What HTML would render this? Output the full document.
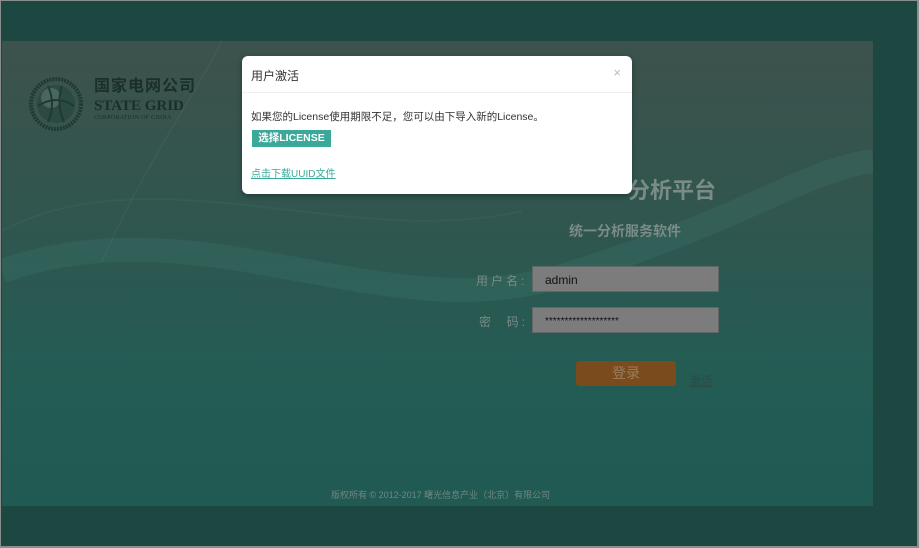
<!DOCTYPE html>
<html><head><meta charset="utf-8"><style>
*{margin:0;padding:0;box-sizing:border-box}
body{width:919px;height:548px;background:#1d4841;font-family:"Liberation Sans","Noto Sans CJK SC",sans-serif;position:relative;overflow:hidden}
.frame{position:absolute;left:0;top:0;width:919px;height:548px;border:1px solid #8a8f8e;border-width:1px 2px 2px 1px}
.panel{position:absolute;left:2px;top:41px;width:871px;height:465px;background:linear-gradient(180deg,#3d524c 0%,#2f564f 40%,#245c54 70%,#205a52 100%);overflow:hidden}
.abs{position:absolute}
.title{right:203px;top:173px;text-align:right;font-size:22px;font-weight:bold;color:#7b8b86;white-space:nowrap}
.sub{left:569px;top:221px;font-size:14px;font-weight:bold;color:#7b8b86}
.lbl{color:#7a8c87;font-size:12px;letter-spacing:3px}
.inp{background:#7c7c7c;border:1px solid #5f6866;height:26px;width:187px;font-size:12px;color:#111;padding:6px 12px}
.btn{left:576px;top:361px;width:100px;height:25px;background:#7a4c1d;border-radius:3px;color:#9a7d5e;font-size:14px;text-align:center;line-height:25px}
.modal{left:242px;top:56px;width:390px;height:138px;background:#fff;border-radius:6px;box-shadow:0 2px 6px rgba(0,0,0,.3)}
</style></head><body>
<div class="frame"></div>
<div class="panel">
<svg class="abs" style="left:0;top:0" width="871" height="465"><path d="M0 230 C200 160 380 290 560 235 S 800 130 871 120" stroke="rgba(70,140,125,.18)" stroke-width="24" fill="none"/><path d="M0 190 C150 110 350 210 520 170" stroke="rgba(120,170,160,.08)" stroke-width="2" fill="none"/><path d="M220 0 C190 60 150 110 100 220" stroke="rgba(120,170,160,.1)" stroke-width="1.5" fill="none"/></svg>
</div>
<svg class="abs" style="left:26px;top:76px" width="60" height="56"><circle cx="30" cy="28" r="25" fill="none" stroke="#1f3a33" stroke-width="4" stroke-dasharray="2 1"/><circle cx="30" cy="28" r="19" fill="#2a4a42"/><circle cx="25" cy="22" r="10" fill="#4a675f"/><path d="M12 30 Q30 18 48 30 M22 10 Q30 28 22 46 M36 10 Q30 28 38 46" stroke="#1f3a33" fill="none" stroke-width="2"/></svg>
<div class="abs" style="left:94px;top:78px;font-size:16px;line-height:18px;font-weight:bold;color:#1b2f2a;letter-spacing:1px">国家电网公司</div>
<div class="abs" style="left:94px;top:98px;font-family:'Liberation Serif',serif;font-size:15px;line-height:16px;font-weight:bold;color:#1b2f2a">STATE GRID</div>
<div class="abs" style="left:94px;top:115px;font-family:'Liberation Serif',serif;font-size:6px;line-height:7px;color:#1b2f2a;letter-spacing:.3px">CORPORATION OF CHINA</div>
<div class="abs title">分析平台</div>
<div class="abs sub">统一分析服务软件</div>
<div class="abs lbl" style="left:476px;top:272px">用户名:</div>
<div class="abs inp" style="left:532px;top:266px">admin</div>
<div class="abs lbl" style="left:479px;top:313px">密 &nbsp;码:</div>
<div class="abs inp" style="left:532px;top:307px;font-size:10px;padding-top:8px">*******************</div>
<div class="abs btn">登录</div>
<div class="abs" style="left:689px;top:372px;font-size:12px;color:#2f4a45;text-decoration:underline">激活</div>
<div class="abs" style="left:331px;top:488px;font-size:9px;color:#6f8882">版权所有 © 2012-2017 曙光信息产业（北京）有限公司</div>
<div class="abs modal">
<div style="height:37px;border-bottom:1px solid #eee;padding:11px 9px;font-size:12px;color:#333">用户激活<span style="position:absolute;right:11px;top:9px;color:#bbb;font-size:13px">×</span></div>
<div class="abs" style="left:9px;top:53px;font-size:10.5px;color:#333;white-space:nowrap">如果您的License使用期限不足，您可以由下导入新的License。</div>
<div class="abs" style="left:10px;top:74px;width:79px;height:17px;background:#3aa99a;color:#fff;font-size:10.5px;font-weight:bold;line-height:17px;text-align:center">选择LICENSE</div>
<div class="abs" style="left:9px;top:109px;font-size:10px;color:#3aa99a;text-decoration:underline">点击下载UUID文件</div>
</div>
</body></html>
